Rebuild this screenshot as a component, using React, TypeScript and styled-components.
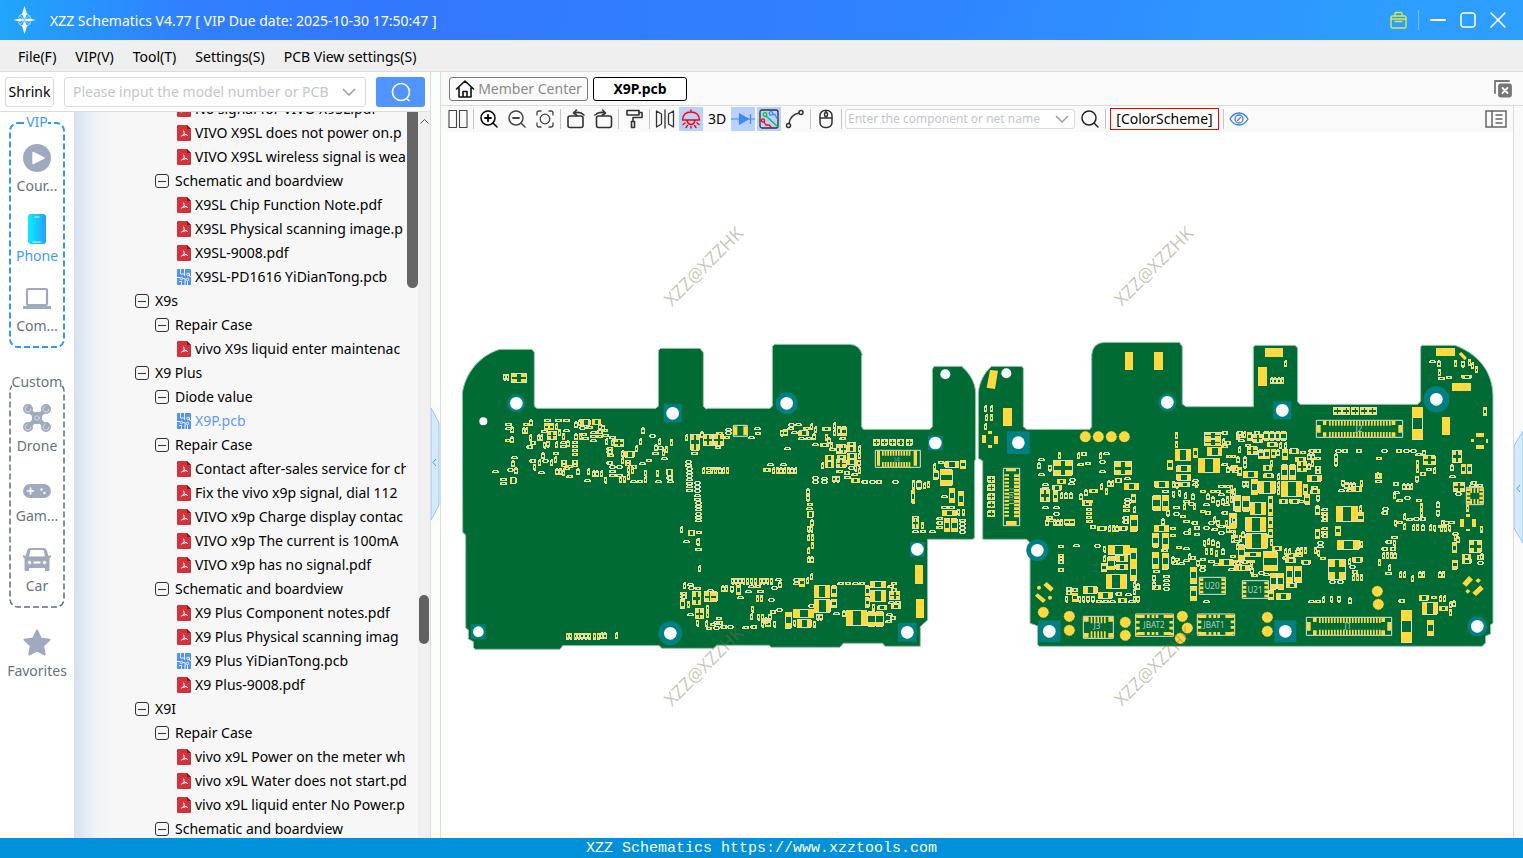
import React from "react";
import styled, { createGlobalStyle, css } from "styled-components";

const Global = createGlobalStyle`
  *, *::before, *::after { box-sizing: border-box; }
  html, body, #root { height: 100%; margin: 0; }
  body { overflow: hidden; background: #fff; }
  body, button, input, select, legend {
    font-family: "Noto Sans", "Open Sans", "Noto Sans CJK SC", sans-serif;
    font-size: 14px;
    line-height: 20px;
    color: #000;
  }
  button { padding: 0; border: 0; background: none; cursor: pointer; }
  svg { display: block; flex: none; }
`;

const line = "#dcdcdc";

/* ---------- frame ---------- */
const Window = styled.div`
  height: 100vh;
  display: flex;
  flex-direction: column;
`;
const TitleBar = styled.header`
  height: 40px;
  flex: none;
  display: flex;
  align-items: center;
  gap: 11px;
  padding: 0 12px 0 11px;
  color: #fff;
  background: linear-gradient(100deg, #20a6fb 0, #3080ff 12%, #3277ff 25%, #3083ff 60%, #2d9cff 88%, #2d9fff 100%);
`;
const Title = styled.h1`
  flex: 1;
  margin: 0;
  font-size: 14px;
  line-height: 20px;
  padding-top: 1px;
  font-weight: 400;
`;
const WindowButtons = styled.div`
  display: flex;
  align-items: center;
  gap: 4px;
`;
const WindowButton = styled.button`
  width: 26px;
  height: 26px;
  display: grid;
  place-items: center;
`;
const TitleRule = styled.i`
  width: 1px;
  height: 20px;
  margin: 0 2px;
  background: #7fc0ff;
`;
const MenuBar = styled.nav`
  height: 32px;
  flex: none;
  display: flex;
  align-items: center;
  gap: 19px;
  padding: 2px 18px 0;
  background: #efefef;
  border-bottom: 1px solid ${line};
`;
const Body = styled.div`
  flex: 1;
  min-height: 0;
  display: flex;
`;
const StatusBar = styled.footer`
  height: 20px;
  flex: none;
  padding-top: 1px;
  background: #0091da;
  color: #fff;
  text-align: center;
  font: 15px/19px "Liberation Mono", monospace;
`;

/* ---------- left side ---------- */
const Side = styled.aside`
  width: 431px;
  flex: none;
  display: flex;
  flex-direction: column;
  border-right: 1px solid ${line};
`;
const SearchRow = styled.form`
  height: 40px;
  flex: none;
  display: flex;
  align-items: center;
  gap: 10px;
  padding: 1px 5px 0;
  border-bottom: 1px solid ${line};
`;
const Shrink = styled.button`
  width: 49px;
  height: 30px;
  border: 1px solid #d8dae0;
  border-radius: 3px;
`;
const Combo = styled.div<{ $h: number }>`
  height: ${(p) => p.$h}px;
  flex: 1;
  display: flex;
  align-items: center;
  border: 1px solid #d8dae0;
  border-radius: 3px;
  background: #fff;
  padding: 0 9px 0 8px;
  input {
    flex: 1;
    min-width: 0;
    border: 0;
    padding: 0;
    outline: 0;
    background: none;
  }
  input::placeholder { color: #c3c6cd; opacity: 1; }
`;
const NetCombo = styled(Combo)`
  flex: none;
  width: 230px;
  padding: 0 5px 0 2px;
  input { font-size: 12px; line-height: 16px; }
`;
const SearchButton = styled.button`
  width: 49px;
  height: 30px;
  border-radius: 3px;
  background: #5094ff;
  display: grid;
  place-items: center;
`;
const SideBody = styled.div`
  flex: 1;
  min-height: 0;
  display: flex;
`;
const Rail = styled.div`
  width: 74px;
  flex: none;
  display: flex;
  flex-direction: column;
  padding: 0 9px;
  gap: 26px;
`;
const RailGroup = styled.fieldset<{ $accent?: boolean }>`
  position: relative;
  min-width: 0;
  margin: 0;
  padding: 0 0 4px;
  border: 0;
  legend {
    position: relative;
    z-index: 1;
    padding: 0;
    margin: 0 auto;
    background: #fff;
    color: ${(p) => (p.$accent ? "#3d9bff" : "#687182")};
  }
`;
const Dashes = styled.svg`
  position: absolute;
  top: -10px;
  left: 0;
  width: 100%;
  height: 226px;
  pointer-events: none;
`;
const RailItem = styled.button<{ $on?: boolean; $wide?: boolean }>`
  width: 100%;
  height: 70px;
  display: flex;
  flex-direction: column;
  align-items: center;
  gap: 4px;
  padding-top: 12px;
  white-space: nowrap;
  color: ${(p) => (p.$on ? "#3d9bff" : "#687182")};
  ${(p) =>
    p.$wide &&
    css`
      margin-top: -15px;
    `}
`;
const TreePane = styled.div`
  flex: 1;
  min-width: 0;
  display: flex;
  background: linear-gradient(90deg, #d5e0f1 0, #e6ecf5 12px, #f2f4f8 24px, #f7f7f7 36px);
`;
const Tree = styled.ul`
  flex: 1;
  min-width: 0;
  overflow: hidden;
  list-style: none;
  margin: 0;
  padding: 0;
`;
const TreeRow = styled.li<{ $level: number; $active?: boolean }>`
  height: 24px;
  display: flex;
  align-items: center;
  gap: ${(p) => (p.$level === 3 ? 4 : 6)}px;
  padding-left: ${(p) => [0, 61, 81, 103][p.$level]}px;
  white-space: nowrap;
  color: ${(p) => (p.$active ? "#5f9bff" : "#000")};
  &:first-child { margin-top: -15px; }
`;
const Toggle = styled.button`
  width: 14px;
  height: 14px;
  border: 1px solid #333;
  border-radius: 3px;
  display: grid;
  place-items: center;
  &::before { content: ""; width: 8px; height: 1px; background: #333; }
`;
const InnerTrack = styled.div`
  width: 12px;
  flex: none;
  padding-left: 1px;
`;
const InnerThumb = styled.div`
  width: 11px;
  height: 176px;
  border-radius: 0 0 6px 6px;
  background: #666;
`;
const OuterTrack = styled.div`
  width: 12px;
  flex: none;
  display: flex;
  flex-direction: column;
  align-items: center;
  background: #f0f0f0;
  padding-top: 5px;
`;
const Spring = styled.i<{ $grow: number }>`
  flex: ${(p) => p.$grow} 0 0;
`;
const OuterThumb = styled.div`
  width: 10px;
  height: 49px;
  border-radius: 5px;
  background: #606060;
`;
const Splitter = styled.div`
  width: 9px;
  flex: none;
  display: flex;
  flex-direction: column;
  background: #f9fff9;
`;

/* ---------- right side ---------- */
const Work = styled.main`
  flex: 1;
  min-width: 0;
  display: flex;
  flex-direction: column;
  border-left: 1px solid ${line};
`;
const Tabs = styled.div`
  height: 34px;
  flex: none;
  display: flex;
  align-items: center;
  gap: 5px;
  padding: 0 11px 0 8px;
  background: #fafafa;
  border-bottom: 1px solid ${line};
`;
const Tab = styled.button<{ $on?: boolean }>`
  height: 24px;
  display: flex;
  align-items: center;
  justify-content: center;
  gap: 3px;
  border: 1px solid ${(p) => (p.$on ? "#000" : "#777")};
  border-radius: 3px;
  background: ${(p) => (p.$on ? "#fff" : "#fafafa")};
  color: ${(p) => (p.$on ? "#000" : "#8a8a8a")};
  font-weight: ${(p) => (p.$on ? 700 : 400)};
  width: ${(p) => (p.$on ? 94 : 139)}px;
`;
const Fill = styled.i`
  flex: 1;
`;
const Lower = styled.div`
  flex: 1;
  min-height: 0;
  display: flex;
`;
const View = styled.div`
  flex: 1;
  min-width: 0;
  display: flex;
  flex-direction: column;
`;
const ToolBar = styled.div`
  height: 26px;
  flex: none;
  display: flex;
  align-items: center;
  padding: 0 6px 0 5px;
  background: #fafafa;
`;
const ToolGroup = styled.div<{ $gap: number }>`
  display: flex;
  align-items: center;
  gap: ${(p) => p.$gap}px;
`;
const Tool = styled.button<{ $on?: boolean }>`
  width: 24px;
  height: 24px;
  display: grid;
  place-items: center;
  background: ${(p) => (p.$on ? "#b9d1fd" : "none")};
`;
const Rule = styled.i`
  width: 1px;
  height: 20px;
  margin: 0 3px;
  background: #c4c4c4;
`;
const ColorScheme = styled.button`
  width: 109px;
  height: 22px;
  margin: 0 1px;
  border: 1px solid #f00;
  background: #fff;
`;
const Canvas = styled.div`
  flex: 1;
  min-height: 0;
  svg { width: 100%; height: 100%; }
`;
const Drawer = styled.div`
  width: 10px;
  flex: none;
  display: flex;
  flex-direction: column;
  border-left: 1px solid ${line};
  background: #fafafa;
`;
const Handle = styled.button`
  width: 9px;
  height: 112px;
`;

/* ---------- board data, three units to the pixel ---------- */
type Panel = { x: number; h: string; v: string; b: string; q: string; pads: string };

const panels: Panel[] = [
  {
    x: 450,
    h: "166 279,166 292,165 328,219 279,240 335,230 347,283 267,316 267,340 267,274 300,340 298,331 334,331 345,388 290,410 288,421 304,421 315,421 328,440 302,440 315,393 310,397 321,455 297,457 312,366 334,366 346,366 358,366 370,478 318,470 352,470 362,473 372,525 390,525 400,598 314,607 366,634 382,622 350,588 388,568 397,543 407,499 407,470 395,478 407,478 420,478 432,499 432,541 451,560 451,616 451,650 440,652 451,184 379,172 416,127 421,151 444,151 456,239 389,265 424,277 389,309 367,333 392,333 402,341 412,350 405,350 436,366 392,366 403,403 448,724 366,706 392,706 402,709 413,709 424,709 434,709 445,709 456,709 466,709 477,733 455,733 467,733 479,733 493,733 504,736 515,736 525,736 535,736 548,736 558,736 568,768 412,768 423,788 412,738 604,700 631,736 654,712 760,715 770,692 786,692 797,735 772,772 778,712 850,780 880,768 892,790 875",
    v: "239 268,182 290,182 320,217 292,226 292,238 314,262 313,271 313,316 280,324 298,336 311,316 334,350 332,280 336,290 333,374 274,385 268,374 310,387 310,446 280,455 285,466 325,484 328,514 362,514 382,532 410,532 430,543 412,556 346,568 325,575 292,625 325,614 344,645 350,636 358,660 328,508 440,519 438,583 420,583 440,618 420,185 391,194 412,250 402,265 388,275 368,313 379,301 388,317 415,327 415,337 418,380 415,412 415,427 421,437 421,451 421,463 441,160 132,169 132,348 909,358 909,372 909,382 909,392 909,404 909,414 909,429 909,441 909,451 907,461 907,496 907,706 313,752 305,757 412,691 590,745 707,700 757,711 814,739 870,768 825,768 845,766 872",
    b: "283 281 14 18,298 281 13 18,393 270 28 16,427 268 26 16,525 364 28 18,650 418 18 18,181 443 18 17,741 626 9 20,715 601 18 17,691 809 14 26",
    q: "184 130 46 27,294 305 26 24,495 328 26 22,722 313 26 48,727 785 26 40,763 786 38 28,737 835 24 32,762 313 26 34",
    pads: "",
  },
  {
    x: 710,
    h: "46 295,46 305,42 318,133 292,135 307,115 319,235 281,256 280,233 292,244 304,281 291,265 322,287 322,223 352,307 340,358 354,389 322,172 400,211 400,415 410,380 420,402 425,425 430,403 438,455 452,478 452,498 452,547 452,307 440,307 452,334 442,334 452,291 520,289 532,684 394,694 496,694 528,715 528,680 562,680 575,680 588,748 567,748 578,748 590,748 602,607 558,607 601,630 601,658 601,196 745,115 766,135 766,82 799,106 781,142 780,175 806,184 770,250 746,250 757,295 824,370 847,383 757,405 757,427 757,446 757,543 756,533 766,543 776,535 814,555 814,529 850,540 860,527 871,180 842,199 836,98 889,122 887,0 880,18 862,20 875,32 887,52 887,10 890,15 349,20 306",
    v: "212 300,301 280,313 290,308 310,345 312,353 322,361 337,370 278,370 298,187 412,198 412,209 412,220 412,231 412,242 412,253 412,0 412,12 412,26 412,37 412,48 412,445 347,445 368,443 390,445 412,433 405,334 397,368 438,380 438,290 475,290 495,302 568,292 588,301 588,292 613,303 613,303 637,292 653,292 680,302 680,670 400,640 457,651 455,742 537,756 537,633 577,64 744,74 744,86 744,97 744,108 744,121 744,132 744,147 744,158 744,169 744,180 744,35 766,45 766,62 768,138 796,150 796,206 755,289 742,301 731,250 870,309 873,319 852,329 852,486 822,398 842,124 828,121 850,142 852,153 852,164 862,176 852,154 873,190 873",
    b: "220 300 12 18,267 303 28 14,331 340 26 9,337 292 26 9,382 290 10 26,395 290 14 28,160 416 22 9,379 345 10 25,412 338 26 9,412 350 26 14,382 376 26 10,412 372 28 14,346 376 26 16,346 396 26 16,412 390 28 14,424 445 26 14,292 544 18 18,705 395 42 17,751 391 15 26,670 422 15 26,691 420 36 46,607 452 8 26,620 452 14 26,606 480 8 40,718 475 17 44,745 486 16 42,697 541 42 17,703 566 17 40,724 566 18 40,79 766 12 28,268 745 16 26,313 766 46 37,313 810 48 37,366 768 13 32,366 808 13 26,250 838 62 26,262 869 42 23,226 847 18 48,466 768 12 30,466 804 12 28,481 755 46 17,481 782 46 34,503 827 28 13,409 841 62 45,474 845 22 44,498 845 22 44,545 823 26 14",
    q: "12 313 28 34,391 345 18 25,379 390 30 22,490 328 18 18,514 328 18 18,539 328 18 18,564 328 18 18,589 328 18 18,607 565 20 30,538 786 32 22,166 873 16 18,0 787 22 27",
    pads: "615 705 24 57,618 807 24 57",
  },
  {
    x: 970,
    h: "333 368,323 400,345 397,400 367,388 392,388 421,205 385,205 430,217 460,217 471,298 446,295 457,463 442,217 529,250 529,250 548,230 558,235 567,350 510,348 535,348 546,348 558,350 570,360 587,463 505,463 515,461 525,461 537,458 560,458 572,264 646,310 643,373 644,264 672,264 682,264 692,264 716,437 788,466 790,288 773,306 776,288 785,378 811,398 811,418 811,475 811,667 448,667 460,688 716,700 811,550 720,580 735,580 748,580 760,580 773,575 657,577 480,610 528,640 510,655 518,690 480,720 480,745 465,765 465,768 480,745 490,610 548,630 555,640 570,665 575,690 540,700 520,672 590,672 610,700 590,725 595,745 585,745 605,600 592,600 612,618 648,640 652,612 685,640 688,660 680,605 695,625 697,690 685,715 690,690 705,730 700,780 675,785 690,765 335,755 305,755 345,770 375,755 400,780 408,788 420,735 480,760 520,755 545,705 545,715 575,640 605,775 715",
    v: "43 226,61 226,46 253,60 253,43 280,264 367,322 368,388 368,203 397,236 405,271 487,284 487,299 487,329 490,344 478,391 460,405 475,413 451,424 451,227 568,250 568,260 568,270 568,415 586,426 586,437 586,490 530,400 648,400 677,286 798,325 798,337 798,350 798,365 798,490 755,500 760,490 775,490 798,500 798,615 307,615 334,606 455,617 456,607 483,625 480,643 488,665 490,676 455,548 735,548 755,575 565,655 595,640 520,670 520,590 540,710 490,725 500,740 510,755 505,768 500,780 485,790 475,765 570,770 590,730 560,740 570,700 630,712 625,725 628,740 635,755 655,705 655,720 655,735 660,605 680,655 670,680 690,770 410,785 405,800 380,800 310,800 640,790 600,785 620,757 325",
    b: "248 466 26 15,262 448 26 13,250 486 14 28,337 511 28 15,358 478 26 11,436 445 18 14,463 460 42 19,285 568 14 18,300 568 14 18,382 589 27 12,447 589 25 12,485 493 12 26,481 556 21 48,415 646 64 27,438 676 36 18,413 680 22 40,438 704 36 14,395 700 14 26,481 655 20 48,481 703 20 48,409 733 60 43,340 771 42 19,385 787 42 18,445 805 26 12,307 790 16 26,616 358 46 34,712 352 44 24,670 355 14 28,685 385 64 43,592 391 16 28,621 408 42 17,621 433 42 18,555 454 42 18,549 497 23 44,577 497 19 46,630 457 28 14,661 712 20 48,661 771 20 41,549 610 16 42,577 610 20 45,549 667 18 50,577 670 18 48,548 768 24 12,553 586 42 19,792 497 20 46,778 550 22 44,748 690 42 18,795 705 20 18",
    q: "54 439 20 18,54 464 20 18,54 491 20 18,54 516 20 18,54 543 20 18,250 391 57 45,211 477 27 38,433 395 52 40,705 307 48 20,705 328 48 20",
    pads: "100 234 26 54,465 66 24 54,552 66 27 54,54 303 13 9,36 315 12 24,72 318 12 24,54 345 13 9",
  },
  {
    x: 1230,
    h: "236 359,255 359,316 359,335 359,378 359,454 359,498 359,520 359,541 359,557 370,438 381,570 428,588 415,658 436,436 450,489 458,490 484,500 508,523 500,558 508,676 488,722 455,718 463,740 463,325 478,350 478,457 533,455 545,500 573,530 565,550 563,570 563,625 585,640 575,655 573,484 618,467 632,455 653,480 653,466 726,667 608,742 695,298 752,322 752,358 707,366 722,603 798,506 809,235 811,255 811,598 91,625 141,648 139,20 305,25 328,72 305,45 343,210 364,255 381,255 410,255 422,0 375,5 405,245 468,205 510,158 680,200 672,15 695,35 692,55 690,65 732,85 725,100 730,275 535,275 546,275 557,275 568,275 592,275 603,275 614,262 635,262 646,270 682,0 415,0 600,5 615,10 630,0 690,20 315,195 662",
    v: "163 91,121 142,131 142,143 142,153 142,623 91,672 91,695 93,714 88,724 98,735 110,624 118,314 370,314 390,578 360,558 390,558 410,610 412,662 403,440 427,557 438,518 460,530 460,541 460,490 487,570 520,570 540,620 515,620 540,708 525,335 450,358 458,368 458,390 450,388 527,390 633,493 570,520 550,520 580,547 583,558 583,575 583,598 583,610 585,635 570,630 587,642 587,655 585,750 588,490 630,457 667,468 667,480 667,491 667,444 688,475 703,508 725,520 725,544 736,566 725,576 725,626 725,636 725,672 612,680 620,752 670,355 685,367 733,378 733,390 733,628 796,640 796,658 815,668 812,657 838,277 799,301 798,323 798,356 802,40 305,25 350,148 338,163 338,140 358,233 370,245 370,243 392,233 400,41 380,41 396,38 453,49 453,142 430,142 455,142 475,260 495,120 628,163 655,175 655,200 652,210 652,222 652,62 712,252 652,262 660,0 465,0 500,35 605,28 615,8 560,120 390,60 690",
    b: "696 136 28 9,760 232 9 26,547 232 31 96,514 841 31 96,592 871 19 45,694 403 14 28,712 403 12 28,438 430 18 16,345 458 11 18,370 470 26 14,319 529 64 45,384 549 17 25,316 589 17 27,322 631 66 27,667 639 13 29,667 691 15 27,697 673 25 12,697 688 27 12,742 676 18 12,369 682 28 15,568 796 27 15,577 817 45 36,628 829 26 14,52 307 12 26,102 305 14 26,119 305 14 26,137 305 13 26,153 305 16 26,112 338 30 12,86 360 14 26,105 358 14 28,124 358 14 26,157 360 16 28,179 357 26 15,198 382 28 13,155 404 17 46,179 404 17 46,232 436 42 18,40 424 44 18,22 412 14 24,100 408 26 14,102 432 28 12,65 448 19 46,86 454 50 36,154 454 62 45,220 463 14 30,242 480 28 12,225 495 14 28,148 508 26 12,180 508 28 12,115 500 14 26,14 499 18 45,39 499 19 45,61 519 46 36,0 551 18 45,48 562 60 42,115 528 13 28,115 564 13 28,48 612 64 43,115 598 13 26,25 645 18 46,47 667 44 14,100 665 42 58,127 649 28 13,168 670 28 12,168 685 28 14,215 691 26 12,169 709 20 48,195 709 20 48,121 730 18 48,144 730 18 48,171 760 28 14,117 782 14 28,139 790 42 18,14 706 44 17,258 527 10 28,257 598 12 28",
    q: "312 232 22 22,338 232 22 22,365 232 22 22,392 232 22 22,417 232 22 22,580 377 36 28,667 361 27 37,670 458 34 27,718 631 36 36,295 688 52 61,69 313 30 24,52 350 30 24,204 396 26 30",
    pads: "105 54 54 26,84 111 27 57,618 54 57 24,666 159 57 24,636 262 24 53,738 309 24 12,738 345 24 12,724 328 8 9,767 328 7 10,690 567 12 25,726 567 12 25,708 552 12 8,708 597 12 7",
  },
];

const parse = (s: string) => (s ? s.split(",").map((t) => t.split(" ").map(Number)) : []);
const box = (x: number, y: number, w: number, h: number) => `M${x} ${y}h${w}v${h}h${-w}z`;

/* Builds the outline path and the solder pad path of one panel. */
function shapes(p: Panel) {
  let outline = "";
  let pad = "";
  const part = (x: number, y: number, w: number, h: number, upright: boolean) => {
    outline += box(x, y, w, h);
    if (upright) {
      const s = Math.round(h * 0.32);
      pad += box(x, y, w, s) + box(x, y + h - s, w, s);
    } else {
      const s = Math.round(w * 0.3);
      pad += box(x, y, s, h) + box(x + w - s, y, s, h);
    }
  };
  parse(p.h).forEach(([x, y]) => part(x + 1, y + 1, 17, 7, false));
  parse(p.v).forEach(([x, y]) => part(x + 1, y + 1, 7, 18, true));
  parse(p.b).forEach(([x, y, w, h]) => part(x, y, w, h, h > w));
  parse(p.q).forEach(([x, y, w, h]) => {
    outline += box(x, y, w, h);
    const a = Math.round(w * 0.36);
    const c = Math.round(h * 0.36);
    for (const px of [x + 1, x + w - a - 1]) for (const py of [y + 1, y + h - c - 1]) pad += box(px, py, a, c);
  });
  parse(p.pads).forEach(([x, y, w, h]) => (pad += box(x, y, w, h)));
  return { outline, pad };
}

type ConnectorProps = { x: number; y: number; w: number; h: number; pins?: [number, number, number]; end?: number; side?: boolean };

/* Connector or chip: a frame with pins along the top and bottom, end pads, or pins at the sides. */
function Connector({ x, y, w, h, pins, end, side }: ConnectorProps) {
  let d = "";
  const len = Math.round(h * 0.3);
  if (pins) {
    const [from, to, step] = pins;
    for (let i = from; i <= to; i += step) d += box(x + i, y + 1, 5, len) + box(x + i, y + h - len - 1, 5, len);
  }
  if (end) d += box(x + 2, y + 14, end, h - 28) + box(x + w - end - 2, y + 14, end, h - 28);
  if (side) {
    for (let k = 0; k < 4; k++) {
      const py = y + 3 + (k * (h - 14)) / 3;
      d += box(x, py, 12, 8) + box(x + w - 12, py, 12, 8);
    }
  }
  return (
    <>
      <path d={box(x, y, w, h)} fill="none" stroke="#dfe3dc" strokeWidth="3" />
      <path d={d} fill="#ffd940" />
    </>
  );
}

const leftBoard =
  "M37 190C45 130 90 75 150 58H245L253 66V228L260 235H618L625 228V62L632 55H750L760 68V228L768 237L775 235H960L967 228V50L973 43H1200Q1230 45 1237 75L1235 76V290L1240 298H1440L1447 290V118L1452 109H1535C1560 130 1577 160 1577 190V388L1574 392V620Q1574 628 1565 628H1433V870L1411 890V949H1305L1298 940H1180L1170 952H963L958 946H800L790 955H635L628 947H338L330 958H75L70 952V935L55 927V900L47 893V615L38 607Z";
const rightBoard =
  "M25 188C28 155 45 125 65 109H155L160 115V290L170 298H360L365 290V75Q368 38 405 37H628L637 50V222L648 230H850V52L855 46H975L983 54V215L990 223H1343L1352 213V50L1357 46H1455C1520 70 1567 120 1569 195V880L1562 884V912L1547 918V938L1537 949H207L203 943V888L180 880V638L170 628H38V393L25 385Z";

/* Mounting holes: centre, hole radius, half size of the land, round or square land. */
const holes: [number, number, number, number, "c" | "s"][] = [
  [199, 220, 19, 27, "c"], [668, 250, 19, 27, "s"], [85, 905, 16, 22, "s"], [661, 910, 19, 36, "c"],
  [1010, 220, 19, 33, "c"], [1456, 339, 19, 22, "s"], [1402, 658, 19, 22, "s"], [1372, 907, 19, 28, "s"],
  [1705, 338, 19, 34, "s"], [2152, 217, 19, 27, "c"], [1762, 661, 19, 33, "c"], [1798, 904, 19, 33, "s"],
  [2497, 241, 19, 27, "s"], [2506, 904, 19, 33, "s"], [2959, 208, 19, 39, "c"], [3082, 889, 19, 30, "c"],
];
const plainHoles = [[100, 274, 12], [1486, 133, 15], [1669, 130, 15]];
const testPads = "346 320,385 320,424 320,463 320,220 847,298 859,298 901,466 877,466 916,637 859,652 894,631 925,892 862,892 904,1222 784,1225 823";
const marks = [[672, 307], [1122, 307], [672, 707], [1122, 707]];

function Board() {
  return (
    <svg viewBox="441 132 1072 706" role="img" aria-label="X9P.pcb board view">
      <g strokeWidth="3" stroke="#9fc4ae" fill="#006b34">
        <path d={leftBoard} transform="translate(450 330) scale(.33333)" />
        <path d={rightBoard} transform="translate(970 330) scale(.33333)" />
      </g>
      <g transform="translate(450 330) scale(.33333)">
        {holes.map(([x, y, r, land, kind]) => (
          <g key={`${x}-${y}`}>
            {kind === "c" ? (
              <circle cx={x} cy={y} r={land} fill="#008080" />
            ) : (
              <rect x={x - land} y={y - land} width={land * 2} height={land * 2} fill="#008080" />
            )}
            <circle cx={x} cy={y} r={r} fill="#fff" />
          </g>
        ))}
        {plainHoles.map(([x, y, r]) => (
          <circle key={x} cx={x} cy={y} r={r} fill="#fff" />
        ))}
      </g>
      {panels.map((p) => {
        const s = shapes(p);
        return (
          <g key={p.x} transform={`translate(${p.x} 330) scale(.33333)`} shapeRendering="crispEdges">
            <path d={s.outline} fill="none" stroke="#d9e0cf" strokeWidth="3" />
            <path d={s.pad} fill="#ffd940" />
          </g>
        );
      })}
      <g transform="translate(710 330) scale(.33333)">
        <Connector x={496} y={361} w={135} h={51} pins={[20, 104, 8]} />
        <path d="M501 362h9v45h-9zM611 362h10v45h-10z" fill="#ffd940" />
        <Connector x={70} y={286} w={42} h={33} side />
      </g>
      <g transform="translate(970 330) scale(.33333)">
        <path d={box(100, 415, 49, 172)} fill="none" stroke="#dfe3dc" strokeWidth="3" />
        <path
          fill="#ffd940"
          d={box(108, 416, 30, 8) + box(108, 573, 32, 12) + Array.from({ length: 12 }, (_, i) => box(103, 433 + i * 11, 14, 6) + box(132, 433 + i * 11, 16, 8)).join("") + box(117, 476, 15, 2) + box(117, 487, 15, 2) + box(117, 509, 15, 2) + box(117, 520, 15, 2)}
        />
        <path fill="#ffd940" d="M60 120L84 122L75 177L50 173ZM220 765L230 756L251 775L242 785ZM195 797L203 790L228 810L219 819Z" />
        <circle cx="207" cy="773" r="6" fill="#ffd940" />
        <circle cx="240" cy="803" r="6" fill="#ffd940" />
        <Connector x={340} y={859} w={90} h={66} pins={[22, 66, 10]} />
        <path fill="#ffd940" d="M342 861h14v14h-14zM415 861h14v14h-14zM342 909h14v14h-14zM415 909h14v14h-14z" />
        <Connector x={497} y={852} w={113} h={67} side />
        <Connector x={682} y={852} w={112} h={64} side />
        <path
          fill="#ffd940"
          d={[497, 682].map((x) => [5, 34, 48, 60, 84].map((o) => box(x + o, 854, o === 5 || o === 84 ? 22 : 8, 10) + box(x + o, 906, o === 5 || o === 84 ? 22 : 8, 9)).join("")).join("")}
        />
        <Connector x={688} y={742} w={78} h={51} side />
        {parse(testPads).map(([x, y]) => (
          <circle key={`${x}-${y}`} cx={x} cy={y} r="16" fill="#ffd940" stroke="#ffd940" strokeWidth="2" strokeDasharray="3 5" />
        ))}
      </g>
      <g transform="translate(1230 330) scale(.33333)">
        <Connector x={259} y={271} w={259} h={51} pins={[38, 218, 9]} end={11} />
        <Connector x={229} y={862} w={256} h={54} pins={[38, 218, 9]} end={11} />
        <path
          fill="#ffd940"
          d="M279 272h10v13h-10zM485 272h11v13h-11zM279 307h10v13h-10zM485 307h11v13h-11zM249 863h11v13h-11zM454 863h11v13h-11zM249 901h11v14h-11zM454 901h11v14h-11z"
        />
        <Connector x={37} y={752} w={78} h={53} side />
        <Connector x={709} y={472} w={51} h={52} pins={[12, 38, 10]} side />
        <path fill="#ffd940" d="M697 760L717 738L729 749L709 770ZM727 788L751 766L761 777L738 798ZM736 752l8-7 9 6-8 8zM706 784l7-7 8 7-8 7zM686 72l8-6 17 18-7 7z" />
      </g>
      <g fill="#b8cfc4" fontSize="8" textAnchor="middle" fontFamily="'Noto Sans', sans-serif">
        <text x="897" y="462" fill="#5aa0a8" fontSize="7">J4</text>
        <text x="1011" y="498" fontSize="6">J5</text>
        <text x="1097" y="629">J3</text>
        <text x="1154" y="628">JBAT2</text>
        <text x="1214" y="628">JBAT1</text>
        <text x="1212" y="589">U20</text>
        <text x="1255" y="593">U21</text>
        <text x="1359" y="432">J2</text>
        <text x="1348" y="629">J1</text>
      </g>
      <g fill="#7c7350" fillOpacity=".42" fontSize="18" fontFamily="'Open Sans', sans-serif">
        {marks.map(([x, y]) => (
          <text key={`${x}-${y}`} transform={`translate(${x} ${y}) rotate(-45)`}>
            XZZ@XZZHK
          </text>
        ))}
      </g>
    </svg>
  );
}

/* ---------- icons ---------- */
const Ico = ({ s = 20, c = "#333", w = 1.4, f = "none", children }: { s?: number; c?: string; w?: number; f?: string; children: React.ReactNode }) => (
  <svg width={s} height={s} viewBox={`0 0 ${s} ${s}`} fill={f} stroke={c} strokeWidth={w} strokeLinecap="round" strokeLinejoin="round" aria-hidden="true">
    {children}
  </svg>
);
const Chevron = ({ c = "#9a9ea8" }) => (
  <svg width="14" height="8" viewBox="0 0 14 8" fill="none" stroke={c} strokeWidth="1.5" aria-hidden="true">
    <path d="M1 1l6 6 6-6" />
  </svg>
);
const Logo = () => (
  <svg width="28" height="32" viewBox="0 0 28 32" aria-hidden="true">
    <circle cx="13.500" cy="16" r="6.500" fill="none" stroke="#bfe3ff" strokeWidth="1" strokeDasharray="6 4.200" strokeDashoffset="-2" />
    <path fill="#fff" d="M13.500 2l2.500 8-2 4.500h-1L11 10zM13.500 30l2.500-8-2-4.500h-1L11 22zM2 16l7-1.500 4 1v1l-4 1zM25 16l-7-1.500-4 1v1l4 1z" />
    <path stroke="#fff" strokeWidth="1" d="M9 11.500l9 9M18 11.500l-9 9" opacity=".6" />
  </svg>
);
const PdfIcon = () => (
  <svg width="14" height="16" viewBox="0 0 14 16" aria-hidden="true">
    <path d="M1 0h9l4 4v11a1 1 0 0 1-1 1H1a1 1 0 0 1-1-1V1a1 1 0 0 1 1-1z" fill="#d4313c" />
    <path d="M10 0l4 4h-4z" fill="#8c0f18" />
    <path d="M6.500 5.500l.8 3.300L4 11.500M7.300 8.800l3.500 1.700M5.800 10.200l4-.6" fill="none" stroke="#fff" strokeWidth="1" />
  </svg>
);
const PcbIcon = () => (
  <svg width="14" height="16" viewBox="0 0 14 16" aria-hidden="true">
    <rect width="14" height="16" rx="1" fill="#4f92fb" />
    <g fill="none" stroke="#fff" strokeWidth=".9">
      <path d="M3.500 0v5H7M7.500 0v7M0 8.500h3M5.500 9.500H8V16M4.500 16v-3.500H2M14 7.500h-1.500M12.500 4.500V7M10.500 16v-4" />
      <circle cx="11" cy="5.500" r="1.300" />
      <circle cx="4.300" cy="9.500" r="1.200" />
      <circle cx="10.500" cy="10.500" r="1.200" />
    </g>
  </svg>
);
const g = "#a0aabf";
const railIcons: Record<string, React.ReactNode> = {
  course: (
    <Ico s={28} c="none" f={g}>
      <circle cx="14" cy="14" r="14" />
      <path d="M10 8.500v11l11-5.500z" fill="#fff" stroke="#fff" />
    </Ico>
  ),
  phone: (
    <svg width="28" height="28" viewBox="0 0 28 28" overflow="visible" aria-hidden="true">
      <defs>
        <linearGradient id="ph" x1="0" x2="1">
          <stop stopColor="#05f0ff" />
          <stop offset="1" stopColor="#2b9bff" />
        </linearGradient>
      </defs>
      <rect x="5" width="18" height="30" rx="3" fill="url(#ph)" />
      <path d="M11.500 3h5M9.500 28h9" stroke="#e8fbff" strokeWidth="1.200" />
    </svg>
  ),
  computer: (
    <Ico s={28} c={g} w={2.200}>
      <rect x="4" y="5" width="20" height="16" rx="1" />
      <path d="M0 23.500h28" strokeWidth="3" />
    </Ico>
  ),
  drone: (
    <Ico s={28} c={g} w={2}>
      <path d="M5 5l18 18M23 5L5 23" strokeWidth="4.500" />
      <g fill={g} stroke={g}>
        <circle cx="5" cy="5" r="4" />
        <circle cx="23" cy="5" r="4" />
        <circle cx="5" cy="23" r="4" />
        <circle cx="23" cy="23" r="4" />
        <rect x="10" y="9" width="8" height="10" rx="3" />
      </g>
      <g stroke="#e3e7ef" strokeWidth=".7">
        <circle cx="5" cy="5" r="3" strokeDasharray="13 6" />
        <circle cx="23" cy="5" r="3" strokeDasharray="13 6" />
        <circle cx="5" cy="23" r="3" strokeDasharray="13 6" />
        <circle cx="23" cy="23" r="3" strokeDasharray="13 6" />
        <circle cx="14" cy="14" r="2.200" />
      </g>
    </Ico>
  ),
  game: (
    <Ico s={28} c="none" f={g}>
      <rect y="10" width="28" height="14" rx="7" />
      <path d="M7.500 14v6M4.500 17h6" stroke="#fff" strokeWidth="1.700" />
      <circle cx="18.500" cy="15.500" r="1.200" fill="#fff" />
      <circle cx="21.500" cy="19" r="1.200" fill="#fff" />
    </Ico>
  ),
  car: (
    <svg width="28" height="28" viewBox="0 0 28 28" fill={g} aria-hidden="true">
      <path fillRule="evenodd" d="M7 4h14q2 0 3 3l1.500 5 2.500-1v2l-1.500 1.500V26q0 1-1 1H23q-1 0-1-1v-2H6v2q0 1-1 1H2.500q-1 0-1-1V14.500L0 13v-2l2.500 1L4 7q1-3 3-3zM7.500 6L6 12.500h16L20.500 6z" />
      <circle cx="6.500" cy="18.500" r="1.700" fill="#fff" />
      <circle cx="21.500" cy="18.500" r="1.700" fill="#fff" />
      <rect x="10.500" y="17.500" width="7" height="2" fill="#fff" />
    </svg>
  ),
  star: (
    <svg width="28" height="28" viewBox="0 0 28 28" aria-hidden="true">
      <path d="M14 1.500l3.800 8 8.700 1.200-6.400 6 1.600 8.800-7.700-4.200-7.700 4.200 1.600-8.800-6.400-6 8.700-1.200z" fill={g} stroke={g} strokeWidth="2" strokeLinejoin="round" />
    </svg>
  ),
};

const Magnify = ({ sign, c = "#222" }: { sign?: string; c?: string }) => (
  <Ico c={c} w={1.500}>
    <circle cx="9" cy="9" r="7" />
    <path d="M14 14l4 4" />
    {sign && <path d={sign} strokeWidth="1.800" />}
  </Ico>
);

const rows: [number, string, ("pdf" | "pcb")?][] = [
  [3, "No signal for VIVO X9SL.pdf", "pdf"],
  [3, "VIVO X9SL does not power on.p", "pdf"],
  [3, "VIVO X9SL wireless signal is wea", "pdf"],
  [2, "Schematic and boardview"],
  [3, "X9SL Chip Function Note.pdf", "pdf"],
  [3, "X9SL Physical scanning image.p", "pdf"],
  [3, "X9SL-9008.pdf", "pdf"],
  [3, "X9SL-PD1616 YiDianTong.pcb", "pcb"],
  [1, "X9s"],
  [2, "Repair Case"],
  [3, "vivo X9s liquid enter maintenac", "pdf"],
  [1, "X9 Plus"],
  [2, "Diode value"],
  [3, "X9P.pcb", "pcb"],
  [2, "Repair Case"],
  [3, "Contact after-sales service for ch", "pdf"],
  [3, "Fix the vivo x9p signal, dial 112", "pdf"],
  [3, "VIVO x9p Charge display contac", "pdf"],
  [3, "VIVO x9p The current is 100mA", "pdf"],
  [3, "VIVO x9p has no signal.pdf", "pdf"],
  [2, "Schematic and boardview"],
  [3, "X9 Plus Component notes.pdf", "pdf"],
  [3, "X9 Plus Physical scanning imag", "pdf"],
  [3, "X9 Plus YiDianTong.pcb", "pcb"],
  [3, "X9 Plus-9008.pdf", "pdf"],
  [1, "X9I"],
  [2, "Repair Case"],
  [3, "vivo x9L Power on the meter wh", "pdf"],
  [3, "vivo x9L Water does not start.pd", "pdf"],
  [3, "vivo x9L liquid enter No Power.p", "pdf"],
  [2, "Schematic and boardview"],
];

const RailSection = ({ name, accent, items }: { name: string; accent?: boolean; items: [string, string][] }) => (
  <RailGroup $accent={accent}>
    <Dashes aria-hidden="true">
      <rect x="1" y="1" width="54" height="224" rx="8" fill="none" stroke={accent ? "#2f97f5" : "#5f6b7d"} strokeWidth={accent ? 2 : 1.500} strokeDasharray="6 3" />
    </Dashes>
    <legend>{name}</legend>
    {items.map(([icon, label]) => (
      <RailItem key={icon} type="button" $on={icon === "phone"}>
        {railIcons[icon]}
        {label}
      </RailItem>
    ))}
  </RailGroup>
);

const PaneHandle = ({ label }: { label: string }) => (
  <Handle type="button" aria-label={label}>
    <svg width="9" height="112" viewBox="0 0 9 112" aria-hidden="true">
      <path d="M9 0L1 13Q0 15 0 17V95Q0 97 1 99L9 112z" fill="#d6eaff" stroke="#8fc6f7" />
      <path d="M6 54L3 57.500L6 61" fill="none" stroke="#3d9bff" />
    </svg>
  </Handle>
);
const SplitHandle = () => (
  <Handle type="button" aria-label="Collapse list">
    <svg width="9" height="112" viewBox="0 0 9 112" aria-hidden="true">
      <path d="M0 0L7 13Q8 15 8 17V95Q8 97 7 99L0 112z" fill="#d6eaff" stroke="#8fc6f7" />
      <path d="M5 51L2 54.500L5 58" fill="none" stroke="#3d9bff" />
    </svg>
  </Handle>
);

export default function App() {
  return (
    <Window>
      <Global />
      <TitleBar>
        <Logo />
        <Title>XZZ Schematics V4.77 [ VIP Due date: 2025-10-30 17:50:47 ]</Title>
        <WindowButtons>
          <WindowButton aria-label="License">
            <Ico s={18} c="#d9e84a" w={1.400}>
              <rect x="1" y="5" width="15" height="12" rx="1.500" />
              <path d="M5 5V2.500q0-1 1-1h5q1 0 1 1V5M1 8h15M5 10.500h7" />
            </Ico>
          </WindowButton>
          <TitleRule />
          <WindowButton aria-label="Minimize">
            <Ico s={18} c="#fff" w={2}>
              <path d="M2 9h14" />
            </Ico>
          </WindowButton>
          <WindowButton aria-label="Maximize">
            <Ico s={18} c="#fff" w={1.500}>
              <rect x="2" y="2" width="14" height="14" rx="3" />
            </Ico>
          </WindowButton>
          <WindowButton aria-label="Close">
            <Ico s={18} c="#fff" w={1.600}>
              <path d="M2 2l14 14M16 2L2 16" />
            </Ico>
          </WindowButton>
        </WindowButtons>
      </TitleBar>
      <MenuBar>
        {["File(F)", "VIP(V)", "Tool(T)", "Settings(S)", "PCB View settings(S)"].map((m) => (
          <button key={m} type="button">{m}</button>
        ))}
      </MenuBar>
      <Body>
        <Side>
          <SearchRow onSubmit={(e) => e.preventDefault()}>
            <Shrink type="button">Shrink</Shrink>
            <Combo $h={30}>
              <input aria-label="Model number or PCB" placeholder="Please input the model number or PCB" />
              <Chevron />
            </Combo>
            <SearchButton aria-label="Search">
              <Ico c="#fff" w={1.600}>
                <circle cx="10" cy="10" r="8.500" />
                <path d="M15.500 16.500l2.500 2" />
              </Ico>
            </SearchButton>
          </SearchRow>
          <SideBody>
            <Rail>
              <RailSection name="VIP" accent items={[["course", "Cour..."], ["phone", "Phone"], ["computer", "Com..."]]} />
              <RailSection name="Custom" items={[["drone", "Drone"], ["game", "Gam..."], ["car", "Car"]]} />
              <RailItem type="button" $wide>
                {railIcons.star}
                Favorites
              </RailItem>
            </Rail>
            <TreePane>
              <Tree>
                {rows.map(([level, text, kind], i) => (
                  <TreeRow key={i} $level={level} $active={text === "X9P.pcb"}>
                    {kind === "pdf" ? <PdfIcon /> : kind === "pcb" ? <PcbIcon /> : <Toggle type="button" aria-label={`Collapse ${text}`} />}
                    {text}
                  </TreeRow>
                ))}
              </Tree>
              <InnerTrack>
                <InnerThumb />
              </InnerTrack>
              <OuterTrack>
                <svg width="9" height="8" viewBox="0 0 9 8" fill="none" stroke="#555" aria-hidden="true">
                  <path d="M.5 6.500l4-4 4 4" />
                </svg>
                <Spring $grow={70} />
                <OuterThumb />
                <Spring $grow={29} />
              </OuterTrack>
            </TreePane>
          </SideBody>
        </Side>
        <Splitter>
          <Spring $grow={336} />
          <SplitHandle />
          <Spring $grow={318} />
        </Splitter>
        <Work>
          <Tabs>
            <Tab type="button">
              <Ico c="#111" w={1.600}>
                <path d="M1.500 10L10 2l8.500 8M4 8.500V18h12V8.500M8 18v-5.500h4V18" />
              </Ico>
              Member Center
            </Tab>
            <Tab type="button" $on>X9P.pcb</Tab>
            <Fill />
            <button type="button" aria-label="Close all tabs">
              <Ico s={19} c="#777" w={1.800}>
                <path d="M2 14V2h14" />
                <rect x="6" y="5.500" width="12" height="12" rx="1.500" fill="#777" />
                <path d="M9.500 9l5 5M14.500 9l-5 5" stroke="#fff" />
              </Ico>
            </button>
          </Tabs>
          <Lower>
            <View>
              <ToolBar>
                <Tool aria-label="Split view">
                  <Ico w={1.100} c="#444">
                    <rect x="1" y="1.500" width="7.500" height="17" />
                    <rect x="11.500" y="1.500" width="7.500" height="17" />
                  </Ico>
                </Tool>
                <Rule />
                <ToolGroup $gap={4}>
                  <Tool aria-label="Zoom in"><Magnify sign="M9 6v6M6 9h6" c="#000" /></Tool>
                  <Tool aria-label="Zoom out"><Magnify sign="M6 9h6" c="#444" /></Tool>
                  <Tool aria-label="Fit">
                    <Ico w={1.300} c="#444">
                      <circle cx="10" cy="10" r="4.800" />
                      <path d="M2 6V4q0-2 2-2h2M14 2h2q2 0 2 2v2M18 14v2q0 2-2 2h-2M6 18H4q-2 0-2-2v-2" />
                    </Ico>
                  </Tool>
                </ToolGroup>
                <Rule />
                <ToolGroup $gap={3}>
                  <Tool aria-label="Rotate left">
                    <Ico w={1.600}>
                      <rect x="2" y="7" width="15" height="11.500" rx="2" />
                      <path d="M8 4q6-2 10 2M10.500 1L7.500 4l3.500 2.500" />
                    </Ico>
                  </Tool>
                  <Tool aria-label="Rotate right">
                    <Ico w={1.600}>
                      <rect x="3.500" y="7" width="15" height="11.500" rx="2" />
                      <path d="M12 4q-6-2-10 2M9.500 1l3 3L9 6.500" />
                    </Ico>
                  </Tool>
                </ToolGroup>
                <Rule />
                <Tool aria-label="Paint">
                  <Ico w={1.600}>
                    <rect x="3" y="1.500" width="12" height="4.500" />
                    <path d="M15 3.500h3v5h-9v4M7.500 12.500h3v6h-3z" />
                  </Ico>
                </Tool>
                <Rule />
                <ToolGroup $gap={2}>
                  <Tool aria-label="Mirror">
                    <Ico w={1.300}>
                      <path d="M1.500 2L6.500 5v10l-5 3zM18.500 2l-5 3v10l5 3zM10 1v18" />
                    </Ico>
                  </Tool>
                  <Tool $on aria-label="Top layer">
                    <Ico c="#f00" w={1.400}>
                      <path d="M1.500 11Q2 3 10 3t8.500 8zM10 1v2M6 11.500q1 4 4 4t4-4M4 14l-2 1.500M6.500 16.500L5 18.500M10 17.500v1.500M13.500 16.500l1.500 2M16 14l2 1.500" />
                    </Ico>
                  </Tool>
                  <Tool aria-label="3D view">3D</Tool>
                  <Tool $on aria-label="Diode">
                    <svg width="24" height="20" viewBox="0 0 24 20" stroke="#3f87ff" strokeWidth="1.200" fill="#3f87ff" aria-hidden="true">
                      <path d="M0 10h24M8.500 5v10l9-5zM19.500 5v10" />
                    </svg>
                  </Tool>
                  <Tool $on aria-label="Net lines">
                    <Ico w={1.300}>
                      <rect x="1" y="1" width="18" height="18" rx="2" stroke="#333" />
                      <path d="M7.500 7.500L19 18" stroke="#12b93a" />
                      <circle cx="6" cy="5.500" r="1.800" stroke="#12b93a" />
                      <circle cx="12" cy="4.500" r="1.800" stroke="#3f87ff" />
                      <path d="M14 5.500h2l2 4" stroke="#3f87ff" />
                      <circle cx="4" cy="11.500" r="1.600" stroke="#f00" />
                      <path d="M5 13l2 3h3l2 2" stroke="#f00" />
                    </Ico>
                  </Tool>
                  <Tool aria-label="Draw curve">
                    <Ico w={1.500}>
                      <circle cx="16" cy="3.500" r="2" />
                      <circle cx="3.500" cy="16.500" r="2" />
                      <path d="M14 4Q5 6 4 14.500" />
                    </Ico>
                  </Tool>
                </ToolGroup>
                <Rule />
                <Tool aria-label="Mouse">
                  <Ico w={1.500}>
                    <rect x="4" y="1.500" width="12" height="17" rx="5" />
                    <path d="M4 9h12M10 1.500v2M10 7.500V9" />
                    <rect x="8.500" y="3.500" width="3" height="4" rx="1.500" />
                  </Ico>
                </Tool>
                <Rule />
                <ToolGroup $gap={3}>
                  <NetCombo $h={20}>
                    <input aria-label="Component or net name" placeholder="Enter the component or net name" />
                    <Chevron />
                  </NetCombo>
                  <Tool aria-label="Find"><Magnify /></Tool>
                </ToolGroup>
                <Rule />
                <ColorScheme type="button">[ColorScheme]</ColorScheme>
                <Rule />
                <Tool aria-label="Show">
                  <Ico c="#3f7fe0" w={1.300}>
                    <path d="M1 10q3.500-6 9-6t9 6q-3.500 6-9 6t-9-6z" />
                    <circle cx="10" cy="10" r="4" />
                    <path d="M8.500 11.500l3-3" />
                  </Ico>
                </Tool>
                <Fill />
                <button type="button" aria-label="Side panel">
                  <svg width="22" height="18" viewBox="0 0 22 18" fill="none" stroke="#666" strokeWidth="1.500" aria-hidden="true">
                    <path d="M1 1h20v16H1zM7 1v16M10.500 5h7M10.500 9h7M10.500 13h7" />
                  </svg>
                </button>
              </ToolBar>
              <Canvas>
                <Board />
              </Canvas>
            </View>
            <Drawer>
              <Spring $grow={326} />
              <PaneHandle label="Open side panel" />
              <Spring $grow={296} />
            </Drawer>
          </Lower>
        </Work>
      </Body>
      <StatusBar>XZZ Schematics https://www.xzztools.com</StatusBar>
    </Window>
  );
}
